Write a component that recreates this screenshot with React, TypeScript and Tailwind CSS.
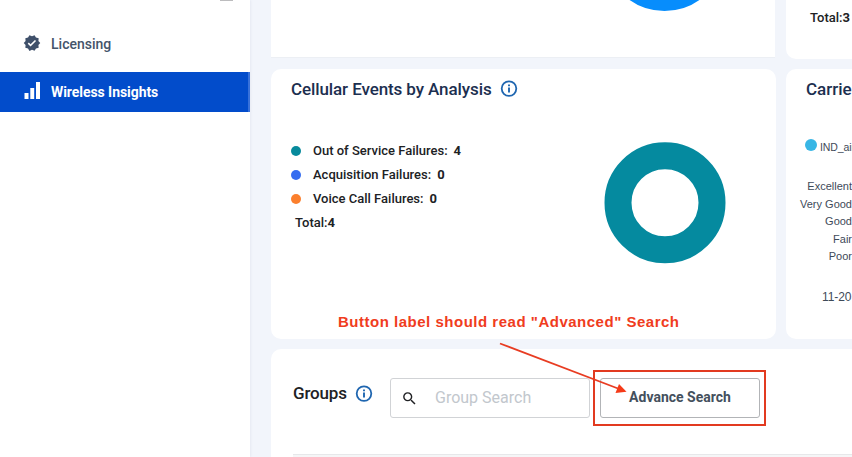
import React from "react";
import { MdSearch, MdVerified } from "react-icons/md";

const events = [
  { label: "Out of Service Failures:", value: 4, dot: "bg-[#078a9c]" },
  { label: "Acquisition Failures:", value: 0, dot: "bg-[#356df0]" },
  { label: "Voice Call Failures:", value: 0, dot: "bg-[#fb7f2d]" },
];

function InfoIcon() {
  return (
    <svg viewBox="0 0 18 18" className="size-[18px] shrink-0 text-[#1f66b0]" fill="none" stroke="currentColor">
      <circle cx="9" cy="8.6" r="7.3" strokeWidth="1.8" />
      <path d="M9 7.6V12.4M9 4.6V6.3" strokeWidth="1.9" />
    </svg>
  );
}

function Sidebar() {
  return (
    <aside className="h-full w-[250px] shrink-0 bg-white shadow-[1px_0_2px_#e6eaf2]">
      <div className="flex h-6 justify-end pr-[17px]">
        <div className="h-px w-[13px] bg-[#bcbcbe]" />
      </div>
      <nav className="text-[14px] leading-10">
        <a className="flex h-10 items-center pl-[23px] font-medium text-[#44546a]">
          <MdVerified className="-mt-[3px] size-[18px] shrink-0 text-[#3f506a]" />
          <span className="ml-[10px]">Licensing</span>
        </a>
        <a className="mt-2 flex h-10 items-center border-r-2 border-[#3871da] bg-[#024ccb] pl-6 font-bold text-white">
          <svg viewBox="0 0 16 17" className="-mt-[3px] h-[17px] w-4 shrink-0" fill="currentColor">
            <path d="M0.5 11H4.5V17H0.5ZM6.3 6H10.2V17H6.3ZM12 0H16V17H12Z" />
          </svg>
          <span className="ml-[11px] tracking-[-0.06px]">Wireless Insights</span>
        </a>
      </nav>
    </aside>
  );
}

function EventsCard() {
  return (
    <section className="h-[270px] rounded-[10px] bg-white pl-5 pt-[9px]">
      <h2 className="flex h-[22px] items-center gap-2 text-[17px] font-medium tracking-[-0.1px] text-[#1c2f50]">
        <span className="mt-px">Cellular Events by Analysis</span>
        <div className="-mt-px">
          <InfoIcon />
        </div>
      </h2>
      <div className="mt-[38px] flex">
        <div className="w-[310px] shrink-0 pt-px text-[13px] font-medium leading-6 text-[#202124]">
          {events.map((e) => (
            <div key={e.label} className="flex h-6 items-center">
              <span className={`size-[10px] rounded-full ${e.dot}`} />
              <span className="ml-3">{e.label}</span>
              <span className="ml-[6px] font-bold">{e.value}</span>
            </div>
          ))}
          <div className="pl-1">
            Total:<b>4</b>
          </div>
        </div>
        <svg viewBox="0 0 122 122" className="ml-[3px] mt-1 size-[122px]">
          <circle cx="61" cy="60.8" r="47" fill="none" stroke="#058a9f" strokeWidth="27" />
        </svg>
      </div>
    </section>
  );
}

function CarrierCard() {
  return (
    <section className="h-[270px] w-[300px] rounded-[10px] bg-white pt-[9px] text-[#3e4a59]">
      <h2 className="ml-5 h-[22px] text-[17px] font-medium leading-[22px] text-[#1c2f50]">Carrier</h2>
      <div className="ml-[19px] mt-[40px] flex h-4 items-center whitespace-nowrap font-['Liberation_Sans',sans-serif] text-[10.5px]">
        <span className="-mt-[6px] mr-[3px] size-3 rounded-full bg-[#38b6e5]" />
        <span className="tracking-[-0.1px]">IND_air</span>
      </div>
      <div className="mt-[22px] w-[66px] text-right font-['Liberation_Sans',sans-serif] text-[11px] leading-[17.5px]">
        <p className="whitespace-nowrap">Excellent</p>
        <p className="whitespace-nowrap">Very Good</p>
        <p>Good</p>
        <p>Fair</p>
        <p>Poor</p>
      </div>
      <div className="ml-[36px] mt-[23px] whitespace-nowrap font-['Liberation_Sans',sans-serif] text-[12px] leading-[16px] tracking-[-0.1px]">11-20</div>
    </section>
  );
}

function GroupsCard() {
  return (
    <section className="flex h-[150px] w-[820px] flex-col rounded-[10px] bg-white pl-[22px] pt-[29px]">
      <div className="flex h-10">
        <h2 className="flex h-[31px] w-[97px] shrink-0 items-center gap-2 text-[17px] font-medium tracking-[-0.15px] text-[#202124]">
          Groups
          <InfoIcon />
        </h2>
        <label className="flex h-10 w-[200px] items-center rounded-[3px] border border-[#d1d3d6] pl-[10px]">
          <MdSearch className="size-[17px] shrink-0 text-[#202124]" />
          <input
            className="ml-[17px] w-[140px] bg-transparent text-[16px] outline-none placeholder:text-[#c2c7cd]"
            placeholder="Group Search"
          />
        </label>
        <button className="ml-[10px] h-10 w-40 rounded-[3px] border border-[#b2b4b7] pb-0.5 text-[14px] font-bold text-[#44505d]">
          Advance Search
        </button>
      </div>
      <div className="mt-[36px] h-10 border-t border-[#e7e8ea] bg-[#f5f6f7]" />
    </section>
  );
}

// Review markup drawn above the page
function Annotation() {
  return (
    <div className="pointer-events-none absolute inset-0">
      <p className="absolute left-[338px] top-[312px] whitespace-nowrap font-['Liberation_Sans',sans-serif] text-[15px] font-bold leading-5 tracking-[0.51px] text-[#f03c20]">
        Button label should read "Advanced" Search
      </p>
      <div className="absolute left-[593px] top-[370px] h-14 w-[173px] border-2 border-[#e23a20]" />
      <svg className="absolute inset-0" width="852" height="457">
        <path d="M500 343.5L618 388.5" stroke="#e83c22" strokeWidth="1.8" />
        <path d="M626.5 391.7L615.5 393L619 384Z" fill="#f53a18" />
      </svg>
    </div>
  );
}

export default function App() {
  return (
    <div className="relative flex h-[457px] w-[852px] overflow-hidden bg-[#f2f5fb] font-['Roboto',sans-serif]">
      <Sidebar />
      <main className="ml-[21px] w-[581px] shrink-0 overflow-hidden">
        <div className="grid w-[815px] grid-cols-[505px_300px] gap-x-[10px]">
          <section className="mr-px flex h-[58px] items-end overflow-hidden border-b border-[#eceff4] bg-white pl-[333px]">
            <div className="mb-[46px] size-[121px] shrink-0 rounded-full border-[27px] border-[#078dfc]" />
          </section>
          <section className="h-[59px] rounded-b-[10px] bg-white pl-6 pt-2 text-[13px] font-medium leading-5 text-[#202124]">
            Total:<b>3</b>
          </section>
        </div>
        <div className="mt-[10px] grid w-[815px] grid-cols-[505px_300px] gap-x-[10px]">
          <EventsCard />
          <CarrierCard />
        </div>
        <div className="mt-[10px]">
          <GroupsCard />
        </div>
      </main>
      <Annotation />
    </div>
  );
}
